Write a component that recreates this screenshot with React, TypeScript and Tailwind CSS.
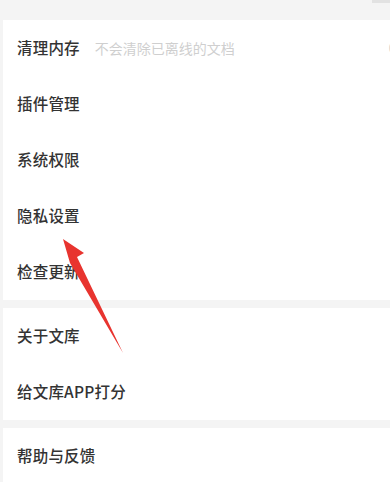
import React from 'react';

type Row = { label: string; hint?: string; value?: string };

const sections: Row[][] = [
    [
        { label: '清理内存', hint: '不会清除已离线的文档', value: '0' },
        { label: '插件管理' },
        { label: '系统权限' },
        { label: '隐私设置' },
        { label: '检查更新' },
    ],
    [{ label: '关于文库' }, { label: '给文库APP打分' }],
    [{ label: '帮助与反馈' }],
];

const App: React.FC = () => {
    return (
        <div
            className="relative w-[390px] h-[482px] overflow-hidden bg-[#f4f4f4] pl-[3px] pt-[20px]"
            style={{ fontFamily: '"Noto Sans CJK SC", "Noto Sans", sans-serif' }}
        >
            <div className="absolute top-0 right-0 w-[18px] h-[3px] bg-[#e2e2e2]"></div>
            <div className="flex flex-col gap-[8px]">
                {sections.map((rows, i) => (
                    <div key={i} className="bg-white flex flex-col">
                        {rows.map(row => (
                            <div key={row.label} className="h-[56px] flex items-center pl-[14px] pr-0">
                                <span className="text-[15.5px] font-medium text-[#333333] tracking-[0.2px]">{row.label}</span>
                                {row.hint && (
                                    <span className="ml-[15px] text-[14px] text-[#cfcfcf]">{row.hint}</span>
                                )}
                                {row.value && (
                                    <span className="ml-auto mr-[-6px] text-[13px] text-[#cccccc]">{row.value}</span>
                                )}
                            </div>
                        ))}
                    </div>
                ))}
            </div>
            <svg className="absolute left-0 top-0 pointer-events-none" width="390" height="482" viewBox="0 0 390 482">
                <polygon points="63,239 84,253 77,257 123,353 70,263" fill="#e8342f" />
            </svg>
        </div>
    );
};

export default App;
